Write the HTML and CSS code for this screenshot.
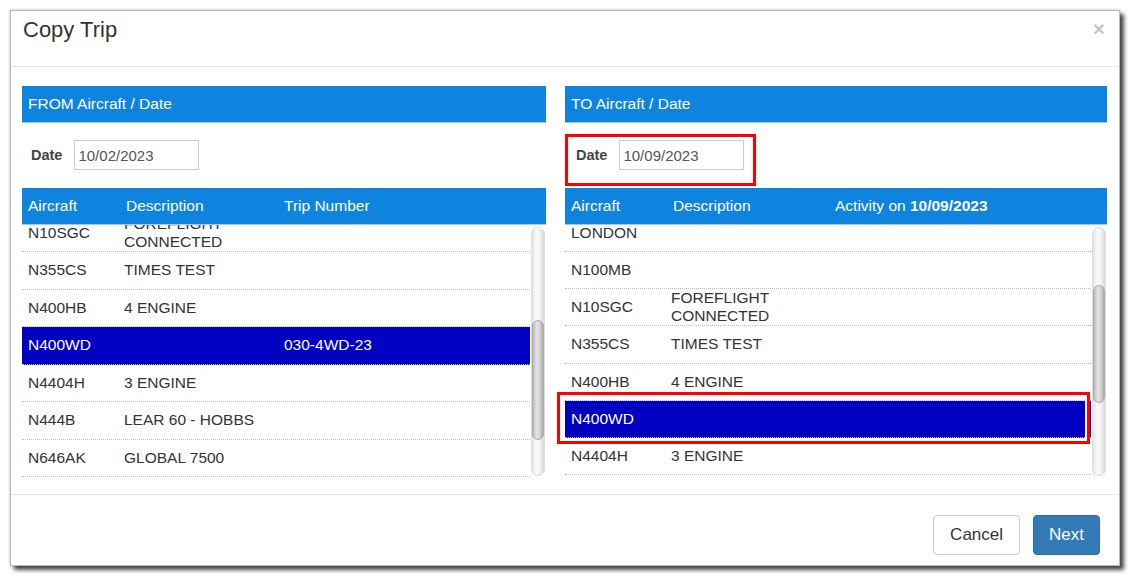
FILE: index.html
```html
<!DOCTYPE html>
<html lang="en">
<head>
<meta charset="utf-8">
<title>Copy Trip</title>
<link rel="stylesheet" href="styles.css">
</head>
<body>
<div class="modal">
  <div class="modal-header">
    <h4 class="modal-title">Copy Trip</h4>
    <button class="close" type="button">&times;</button>
  </div>
  <div class="modal-body">
    <div class="panel">
      <div class="section-bar">FROM Aircraft / Date</div>
      <div class="date-row">
        <label class="date-label">Date</label>
        <input class="date-input" type="text" value="10/02/2023">
      </div>
      <div class="grid-head cols-from">
        <div class="cell">Aircraft</div>
        <div class="cell cell-desc-head">Description</div>
        <div class="cell">Trip Number</div>
      </div>
      <div class="list-area">
        <div class="viewport">
          <div class="rows rows-from">
            <div class="row cols-from"><div class="cell">N10SGC</div><div class="cell">FOREFLIGHT CONNECTED</div><div class="cell"></div></div>
            <div class="row cols-from"><div class="cell">N355CS</div><div class="cell">TIMES TEST</div><div class="cell"></div></div>
            <div class="row cols-from"><div class="cell">N400HB</div><div class="cell">4 ENGINE</div><div class="cell"></div></div>
            <div class="row cols-from selected"><div class="cell">N400WD</div><div class="cell"></div><div class="cell">030-4WD-23</div></div>
            <div class="row cols-from"><div class="cell">N4404H</div><div class="cell">3 ENGINE</div><div class="cell"></div></div>
            <div class="row cols-from"><div class="cell">N444B</div><div class="cell">LEAR 60 - HOBBS</div><div class="cell"></div></div>
            <div class="row cols-from"><div class="cell">N646AK</div><div class="cell">GLOBAL 7500</div><div class="cell"></div></div>
            <div class="row cols-from"><div class="cell">N700CL</div><div class="cell">CHALLENGER 350</div><div class="cell"></div></div>
          </div>
        </div>
        <div class="scrollbar"><div class="thumb thumb-from"></div></div>
      </div>
    </div>

    <div class="panel">
      <div class="section-bar">TO Aircraft / Date</div>
      <div class="date-row annotated">
        <label class="date-label">Date</label>
        <input class="date-input" type="text" value="10/09/2023">
      </div>
      <div class="grid-head cols-to">
        <div class="cell">Aircraft</div>
        <div class="cell cell-desc-head">Description</div>
        <div class="cell">Activity on <b>10/09/2023</b></div>
      </div>
      <div class="list-area list-to">
        <div class="viewport">
          <div class="rows rows-to">
            <div class="row row-to cols-to"><div class="cell">LONDON</div><div class="cell"></div><div class="cell"></div></div>
            <div class="row row-to cols-to"><div class="cell">N100MB</div><div class="cell"></div><div class="cell"></div></div>
            <div class="row row-to cols-to"><div class="cell">N10SGC</div><div class="cell">FOREFLIGHT CONNECTED</div><div class="cell"></div></div>
            <div class="row row-to cols-to"><div class="cell">N355CS</div><div class="cell">TIMES TEST</div><div class="cell"></div></div>
            <div class="row row-to cols-to"><div class="cell">N400HB</div><div class="cell">4 ENGINE</div><div class="cell"></div></div>
            <div class="row row-to cols-to selected"><div class="cell">N400WD</div><div class="cell"></div><div class="cell"></div></div>
            <div class="row row-to cols-to"><div class="cell">N4404H</div><div class="cell">3 ENGINE</div><div class="cell"></div></div>
            <div class="row row-to cols-to"><div class="cell">N444B</div><div class="cell">LEAR 60 - HOBBS</div><div class="cell"></div></div>
          </div>
        </div>
        <div class="scrollbar"><div class="thumb thumb-to"></div></div>
        <div class="row-annotation"></div>
      </div>
    </div>
  </div>
  <div class="modal-footer">
    <button class="btn btn-default" type="button">Cancel</button>
    <button class="btn btn-primary" type="button">Next</button>
  </div>
</div>
</body>
</html>
```

FILE: styles.css
```css
* {
  box-sizing: border-box;
}

html, body {
  margin: 0;
  background: #ffffff;
}

body {
  padding: 10px;
  font-family: "Liberation Sans", Arial, sans-serif;
  color: #333333;
}

.modal {
  width: 1110px;
  background: #ffffff;
  border: 1px solid #b9b9b9;
  box-shadow: 4px 4px 4px rgba(0, 0, 0, 0.7), 0 0 3px rgba(0, 0, 0, 0.25);
}

/* Header */
.modal-header {
  height: 56px;
  display: flex;
  align-items: flex-start;
  justify-content: space-between;
  padding: 7px 14px 0 12px;
  border-bottom: 1px solid #e5e5e5;
}

.modal-title {
  margin: 0;
  font-size: 22px;
  font-weight: normal;
  line-height: 24px;
  color: #333333;
}

.close {
  margin: 0;
  padding: 0;
  border: 0;
  background: transparent;
  font-family: "Liberation Sans", Arial, sans-serif;
  font-size: 21px;
  line-height: 21px;
  font-weight: bold;
  color: #000000;
  opacity: 0.22;
}

/* Body */
.modal-body {
  display: grid;
  grid-template-columns: 524px 1fr;
  column-gap: 19px;
  padding: 19px 12px 16px 11px;
}

.panel {
  display: flex;
  flex-direction: column;
  align-items: flex-start;
}

.section-bar {
  width: 100%;
  height: 37px;
  display: flex;
  align-items: center;
  padding-left: 6px;
  background: #0f84de;
  border-bottom: 1px solid #9ccbef;
  color: #ffffff;
  font-size: 15.5px;
}

.date-row {
  display: inline-flex;
  align-items: center;
  gap: 12px;
  margin: 11px 0 2px;
  padding: 3px 9px 13px 6px;
  border: 3px solid transparent;
}

.date-row.annotated {
  border-color: #ff0000;
  padding-left: 8px;
}

.date-label {
  font-size: 14.5px;
  font-weight: bold;
  color: #444444;
}

.date-input {
  width: 125px;
  height: 30px;
  margin: 0;
  padding: 0 0 0 3px;
  border: 1px solid #cccccc;
  border-radius: 0;
  font-family: "Liberation Sans", Arial, sans-serif;
  font-size: 15px;
  color: #555555;
  background: #ffffff;
}

.grid-head {
  width: 100%;
  height: 37px;
  display: grid;
  align-items: center;
  background: #0f84de;
  border-bottom: 1px solid #9ccbef;
  color: #ffffff;
  font-size: 15.5px;
}

.cols-from {
  grid-template-columns: 96px 160px 1fr;
}

.cols-to {
  grid-template-columns: 100px 164px 1fr;
}

.cell {
  padding-left: 6px;
}

.grid-head .cell-desc-head {
  padding-left: 8px;
}

/* Scrolling list */
.list-area {
  position: relative;
  width: 100%;
  height: 253px;
  display: flex;
}

.viewport {
  flex: 1;
  overflow: hidden;
}

.rows-from {
  margin-top: -10.5px;
}

.rows-to {
  margin-top: -10.2px;
}

.row {
  display: grid;
  align-items: center;
  height: 37.5px;
  border-bottom: 1px dotted #bdbdbd;
  font-size: 15.5px;
  line-height: 18px;
  color: #333333;
}

.row-to {
  height: 37.2px;
}

.row.selected {
  background: #0000c0;
  color: #ffffff;
}

.scrollbar {
  width: 14px;
  margin: 2px 1px 2px 1px;
  border-radius: 7px;
  border: 1px solid #dcdcdc;
  background: linear-gradient(to right, #e2e2e2, #fbfbfb 35%, #f3f3f3 65%, #d9d9d9);
}

.thumb {
  width: 12px;
  height: 120px;
  border-radius: 6px;
  border: 1px solid #acacac;
  background: linear-gradient(to right, #b9b9b9, #e2e2e2 35%, #d6d6d6 65%, #a9a9a9);
}

.thumb-from {
  margin-top: 92px;
}

.thumb-to {
  margin-top: 57px;
  height: 118px;
}

.row-annotation {
  position: absolute;
  left: -8px;
  top: 167px;
  width: 533px;
  height: 52px;
  border: 3px solid #ff0000;
  box-shadow: inset 0 0 0 2px #ffffff;
}

/* Footer */
.modal-footer {
  display: flex;
  justify-content: flex-end;
  gap: 13px;
  padding: 20px 19px 10px 12px;
  border-top: 1px solid #e5e5e5;
}

.btn {
  height: 40px;
  padding: 0 16px;
  border-radius: 4px;
  font-family: "Liberation Sans", Arial, sans-serif;
  font-size: 17px;
  cursor: pointer;
}

.btn-default {
  background: #ffffff;
  border: 1px solid #cccccc;
  color: #333333;
}

.btn-primary {
  padding: 0 15px;
  background: #337ab7;
  border: 1px solid #2e6da4;
  color: #ffffff;
}
```
